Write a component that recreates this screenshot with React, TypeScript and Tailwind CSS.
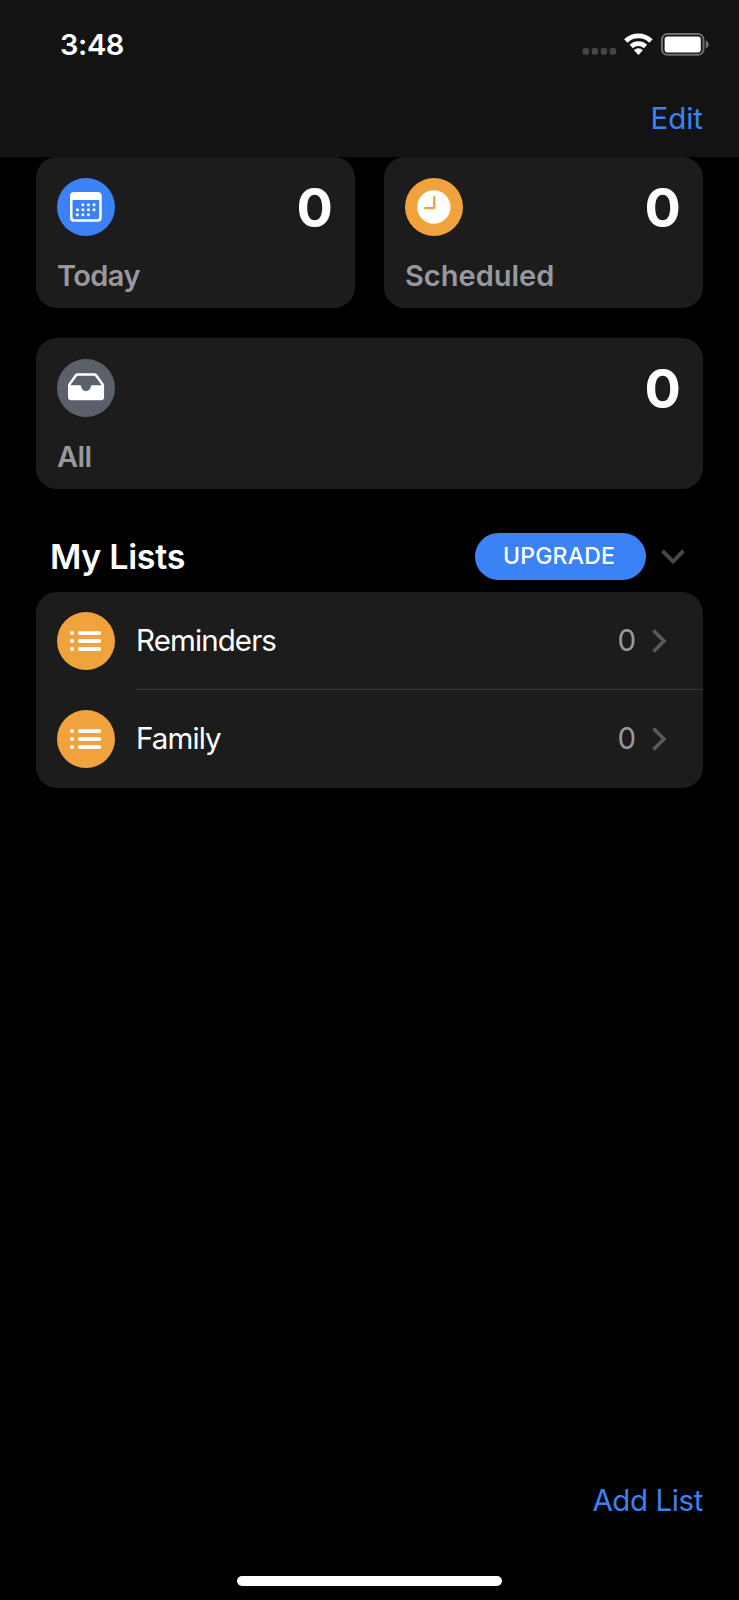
import type { ReactNode } from 'react';

const lists = [
  { name: 'Reminders', count: 0 },
  { name: 'Family', count: 0 },
];

function StatusIcons() {
  return (
    <svg width="128" height="24" viewBox="0 0 128 24" fill="none">
      <g fill="#454545">
        <rect x="0.7" y="15.9" width="6.4" height="6.8" rx="1.9" />
        <rect x="9.7" y="15.9" width="6.4" height="6.8" rx="1.9" />
        <rect x="18.7" y="15.9" width="6.4" height="6.8" rx="1.9" />
        <rect x="27.7" y="15.9" width="6.4" height="6.8" rx="1.9" />
      </g>
      <g stroke="#fff" strokeWidth="4.8">
        <path d="M43.8 8.9a18.2 18.2 0 0 1 25.2 0" />
        <path d="M49.3 14.5a10.4 10.4 0 0 1 14.2 0" />
      </g>
      <path d="M51.9 18.3a6.2 6.2 0 0 1 9 0l-4.5 4.7z" fill="#fff" />
      <rect x="79.9" y="2.1" width="41.6" height="20.6" rx="5.4" stroke="#6e6e6e" strokeWidth="2" />
      <rect x="82.6" y="4.5" width="36.2" height="15.9" rx="3" fill="#fff" />
      <path d="M123.7 8.5c1.9.7 3 2 3 3.900s-1.100 3.200-3 3.900z" fill="#6e6e6e" />
    </svg>
  );
}

function CalendarIcon() {
  return (
    <svg viewBox="0 0 58 58" fill="#fff">
      <path
        fillRule="evenodd"
        d="M17 14h23.7a4 4 0 0 1 4 4v21.7a4 4 0 0 1-4 4H17a4 4 0 0 1-4-4V18a4 4 0 0 1 4-4zm-.2 8a1.3 1.3 0 0 0-1.3 1.3v15.7a2.2 2.2 0 0 0 2.2 2.2h22.3a2.2 2.2 0 0 0 2.2-2.2V23.3a1.3 1.3 0 0 0-1.3-1.3z"
      />
      <circle cx="25.9" cy="26.7" r="1.5" />
      <circle cx="31.4" cy="26.7" r="1.5" />
      <circle cx="37" cy="26.7" r="1.5" />
      <circle cx="20.4" cy="31.8" r="1.5" />
      <circle cx="25.9" cy="31.8" r="1.5" />
      <circle cx="31.4" cy="31.8" r="1.5" />
      <circle cx="37" cy="31.8" r="1.5" />
      <circle cx="20.4" cy="36.8" r="1.5" />
      <circle cx="25.9" cy="36.8" r="1.5" />
      <circle cx="31.4" cy="36.8" r="1.5" />
    </svg>
  );
}

function ClockIcon() {
  return (
    <svg viewBox="0 0 58 58" fill="none">
      <circle cx="28.8" cy="29" r="16.7" fill="#fff" />
      <path d="M29.2 19.2v10.9h-9" stroke="#f0a33c" strokeWidth="2.4" strokeLinecap="round" strokeLinejoin="round" />
    </svg>
  );
}

function TrayIcon() {
  return (
    <svg viewBox="0 0 58 58" fill="#fff">
      <path
        fillRule="evenodd"
        d="M20.5 14.3h17q1.6 0 2.6 1.3l6.2 8.6q.8 1.1.8 2.6v11.2q0 3.3-3.3 3.3H14.3q-3.3 0-3.3-3.3V26.8q0-1.5.8-2.6l6.2-8.6q1-1.3 2.5-1.3zm.5 2.4q-.8 0-1.3.7l-5.9 8.2q-.3.7.4.7h8.6q1.5 0 1.5 1.5a4.7 4.3 0 0 0 9.4 0q0-1.5 1.5-1.5h8.6q.7 0 .4-.7l-5.9-8.2q-.5-.7-1.3-.7z"
      />
    </svg>
  );
}

function ListIcon() {
  return (
    <svg viewBox="0 0 58 58" fill="#fff" stroke="#fff" strokeLinecap="round">
      <g stroke="none">
        <circle cx="15" cy="21.1" r="2" />
        <circle cx="15" cy="29" r="2" />
        <circle cx="15" cy="37" r="2" />
      </g>
      <path d="M22.8 21.1h19.5M22.8 29h19.5M22.8 37h19.5" strokeWidth="3.9" />
    </svg>
  );
}

interface SummaryCardProps {
  label: string;
  count: number;
  color: string;
  icon: ReactNode;
  className?: string;
  labelClassName?: string;
}

function SummaryCard({ label, count, color, icon, className = '', labelClassName = '' }: SummaryCardProps) {
  return (
    <div className={`h-[151px] rounded-[21px] bg-[#1c1c1c] px-[21px] pt-[21px] ${className}`}>
      <div className="flex h-[59px] items-start justify-between">
        <div className={`size-[58px] rounded-full ${color}`}>{icon}</div>
        <span className="mr-px pt-px text-[54px] leading-[58px] font-bold text-white">{count}</span>
      </div>
      <div className={`mt-[21px] text-[29px] leading-9 font-semibold text-[#98989f] ${labelClassName}`}>{label}</div>
    </div>
  );
}

export default function App() {
  return (
    <div className="flex h-[1600px] w-[739px] flex-col bg-black font-['Inter',sans-serif] text-[29.5px]">
      <header className="h-[157px] bg-[#131313]">
        <div className="flex h-[88px] items-center justify-between pr-[29px] pl-[60px]">
          <span className="pt-px text-[29px] leading-9 font-semibold tracking-[-0.4px] text-white">3:48</span>
          <StatusIcons />
        </div>
        <div className="flex h-[61px] items-center justify-end pr-9">
          <button className="text-[#3b82f7]">Edit</button>
        </div>
      </header>

      <main className="flex-1 px-9">
        <div className="grid grid-cols-2 gap-x-[29px] gap-y-[29.5px]">
          <SummaryCard
            label="Today"
            count={0}
            color="bg-[#3b82f7]"
            icon={<CalendarIcon />}
            labelClassName="tracking-[-0.6px]"
          />
          <SummaryCard label="Scheduled" count={0} color="bg-[#f0a33c]" icon={<ClockIcon />} />
          <SummaryCard
            label="All"
            count={0}
            color="bg-[#5b606a]"
            icon={<TrayIcon />}
            className="col-span-2"
            labelClassName="tracking-[-0.6px]"
          />
        </div>

        <div className="mt-[44.5px] flex h-[47px] items-center pr-[18px] pl-[14px]">
          <h2 className="flex-1 text-[34px] leading-[47px] font-semibold tracking-[-0.3px] text-white">My Lists</h2>
          <button className="h-[47px] w-[171px] rounded-full bg-[#3b82f7] pr-[3px] text-[23px] font-medium tracking-[0.2px] text-white">
            UPGRADE
          </button>
          <svg className="ml-[15px]" width="24" height="16" viewBox="0 0 24 16" fill="none">
            <path d="M1.5 1.8 12 12.5 22.5 1.8" stroke="#48484a" strokeWidth="3.8" />
          </svg>
        </div>

        <ul className="mt-3 rounded-[21px] bg-[#1c1c1c]">
          {lists.map((list, i) => (
            <li key={list.name} className="flex h-[98px] items-center pl-[21px]">
              <div className="size-[58px] rounded-full bg-[#f0a33c]">
                <ListIcon />
              </div>
              <div
                className={`ml-[21px] flex h-full flex-1 items-center border-b pr-[36px] ${
                  i < lists.length - 1 ? 'border-[#3a3a3c]' : 'border-transparent'
                }`}
              >
                <span className="flex-1 tracking-[-0.9px] text-white">{list.name}</span>
                <span className="text-[#98989f]">{list.count}</span>
                <svg className="ml-4" width="15" height="24" viewBox="0 0 15 24" fill="none">
                  <path d="M1.5 1.5 12 12 1.5 22.5" stroke="#5a5a5e" strokeWidth="3.6" />
                </svg>
              </div>
            </li>
          ))}
        </ul>
      </main>

      <footer className="flex h-[124px] flex-col items-center">
        <button className="mr-9 self-end leading-[48px] tracking-[-0.4px] text-[#3b82f7]">Add List</button>
        <div className="mt-[52px] h-[10px] w-[265px] rounded-full bg-white" />
      </footer>
    </div>
  );
}
